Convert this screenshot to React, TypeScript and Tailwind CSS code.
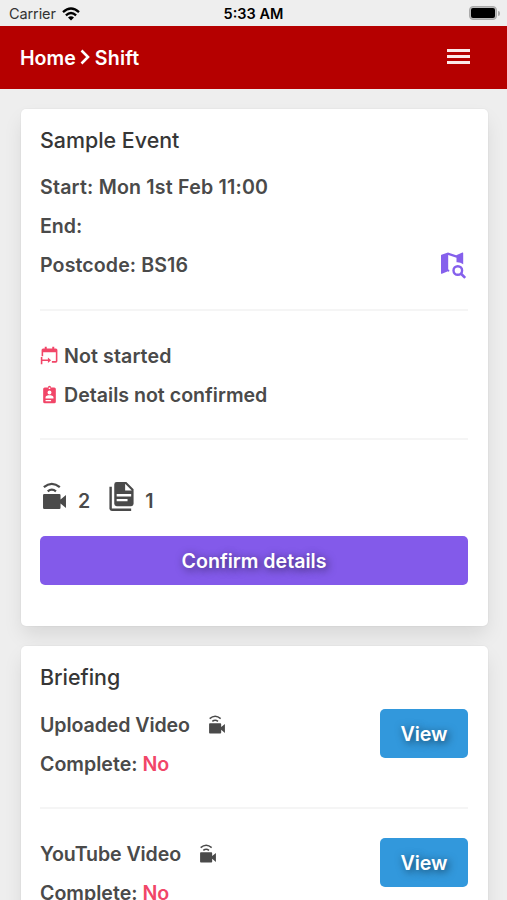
import type { ReactNode } from 'react'

function Icon({ className, children }: { className: string; children: ReactNode }) {
  return (
    <svg viewBox="0 0 24 24" fill="currentColor" className={`shrink-0 ${className}`}>
      {children}
    </svg>
  )
}

function VideoWireless({ className }: { className: string }) {
  return (
    <Icon className={className}>
      <path d="M3.500 10H16a1 1 0 0 1 1 1v3.500l4.500-3.700v10.700L17 17.800v3.500a1 1 0 0 1-1 1H3.500a1 1 0 0 1-1-1V11a1 1 0 0 1 1-1z" />
      <path d="M3.200 4.300Q9.800-1.200 16.400 4.300M6.400 7.700Q9.800 4.900 13.200 7.700" fill="none" stroke="currentColor" strokeWidth="1.900" />
    </Icon>
  )
}

function DocumentMultiple({ className }: { className: string }) {
  return (
    <Icon className={className}>
      <path
        fillRule="evenodd"
        d="M8 0h8l6 6v12a2 2 0 0 1-2 2H8a2 2 0 0 1-2-2V2a2 2 0 0 1 2-2zm7 1.5V7h5.5zM8 10v2h12v-2zm0 4v2h9v-2z"
      />
      <path d="M2 4h2v18h16v2H4a2 2 0 0 1-2-2z" />
    </Icon>
  )
}

function MapSearch({ className }: { className: string }) {
  return (
    <svg viewBox="0 0 29 29" fill="currentColor" className={`shrink-0 ${className}`}>
      <path d="M2.500 3.800 9 1.500l8.200 2.700L23.400 1.600q.8-.3.8.6v11q-3-2.300-6.700-2V6.700L9.200 4v14.500l1.300.4q-.5 1-.5 2l-1-.6-6.100 2.500q-.9.300-.9-.6V4.500q0-.5.500-.7z" />
      <circle cx="18.800" cy="19.500" r="4.300" fill="none" stroke="currentColor" strokeWidth="2.400" />
      <path d="m21.800 22.500 4.400 4.400" stroke="currentColor" strokeWidth="2.600" />
    </svg>
  )
}

function CalendarStart({ className }: { className: string }) {
  return (
    <Icon className={className}>
      <path d="M4 3h2V1h2.500v2h7V1H18v2h2a2 2 0 0 1 2 2v14a2 2 0 0 1-2 2h-5v-2h5V8H4v5H2V5a2 2 0 0 1 2-2z" />
      <path d="M1 14h2v3h7v-2.500l4 3.500-4 3.500V19H3v4H1z" />
    </Icon>
  )
}

function ClipboardAccount({ className }: { className: string }) {
  return (
    <Icon className={className}>
      <path
        fillRule="evenodd"
        d="M6 3h4a2 2 0 0 1 4 0h4a2 2 0 0 1 2 2v16a2 2 0 0 1-2 2H6a2 2 0 0 1-2-2V5a2 2 0 0 1 2-2zm5 0v2h2V3zm1 4a2.500 2.500 0 0 0 0 5 2.500 2.500 0 0 0 0-5zm-5 8.500V17h10v-1.500c0-1.700-3-2.500-5-2.500s-5 .8-5 2.500zM7 19v1.500h7V19z"
      />
    </Icon>
  )
}

function StatusBar() {
  return (
    <div className="grid h-[26px] grid-cols-3 items-center px-[9px] pt-[2px] text-black">
      <div className="flex items-center gap-1.5 text-[14.5px] font-normal text-[#333]">
        <span className="tracking-[-0.1px]">Carrier</span>
        <svg viewBox="0 0 18 14" className="h-[14px] w-[18px] text-black" fill="none" stroke="currentColor" strokeWidth="2.3">
          <path d="M1 5.200Q9-2.200 17 5.200M3.900 8.300Q9 3.600 14.100 8.300" />
          <path d="M9 13.500 6 10.400Q9 8 12 10.400z" fill="currentColor" stroke="none" />
        </svg>
      </div>
      <div className="text-center text-[14.5px] font-semibold">5:33 AM</div>
      <div className="-mr-[2px] flex items-center justify-end pb-[2px]">
        <div className="h-[14px] w-[28px] rounded-[4px] border border-[#aaa] bg-[#bbb] p-[1px]">
          <div className="h-full rounded-[2px] bg-black" />
        </div>
        <div className="ml-px h-[5px] w-[2px] rounded-r-full bg-[#aaa]" />
      </div>
    </div>
  )
}

function Header() {
  return (
    <header className="flex h-[63px] items-center justify-between bg-[#b50000] pl-5 pr-[37px] text-white">
      <nav className="flex items-center pt-[2px] text-[19.600px] font-semibold">
        <span>Home</span>
        <svg viewBox="0 0 10 16" className="mb-[2px] ml-[4px] mr-[5px] h-4 w-[10px]" fill="none" stroke="currentColor" strokeWidth="2.600">
          <path d="M1.500 1.500 8 8l-6.500 6.500" />
        </svg>
        <span className="tracking-[0.2px]">Shift</span>
      </nav>
      <div className="flex w-[23px] flex-col gap-[3px] pb-[3px]">
        <div className="h-[3px] bg-[#fbeaea]" />
        <div className="h-[3px] bg-[#fbeaea]" />
        <div className="h-[3px] bg-[#fbeaea]" />
      </div>
    </header>
  )
}

function Card({ className, children }: { className: string; children: ReactNode }) {
  return (
    <section
      className={`ml-[20.5px] mr-[19.5px] rounded-[5px] bg-white pl-[19.5px] pr-[19.5px] pt-[12px] shadow-[0_10px_20px_-2px_rgba(10,10,10,0.1),0_0_0_1px_rgba(10,10,10,0.02)] ${className}`}
    >
      {children}
    </section>
  )
}

function Divider() {
  return <hr className="h-[2px] border-0 bg-[#f5f5f5]" />
}

function Briefing({ title }: { title: string }) {
  return (
    <div className="flex h-[102px] items-start justify-between">
      <div className="pt-px leading-[39px]">
        <div className="flex items-center">
          <span className="tracking-[-0.1px]">{title}</span>
          <VideoWireless className="ml-[17px] h-[20px] w-[20px] -translate-y-px" />
        </div>
        <div>
          Complete: <span className="text-[#f14668]">No</span>
        </div>
      </div>
      <button className="mt-[4px] h-[49px] w-[88px] rounded-[5px] bg-[#3298dc] pt-[2px] font-semibold text-white [text-shadow:2px_2px_8px_rgba(0,0,0,0.6)]">
        View
      </button>
    </div>
  )
}

export default function App() {
  return (
    <div className="h-[900px] overflow-hidden bg-[#eeeeee] font-['Inter',sans-serif] text-[19.600px] font-semibold text-[#4a4a4a]">
      <StatusBar />
      <Header />
      <main className="pt-5">
        <Card className="h-[517px]">
          <h2 className="mb-[8px] text-[21.400px] font-medium leading-[39px] text-[#363636]">Sample Event</h2>
          <div className="leading-[39px]">
            <div className="tracking-[0.2px]">Start: Mon 1st Feb 11:00</div>
            <div>End:</div>
            <div className="flex items-center justify-between">
              <span className="tracking-[0.1px]">Postcode: BS16</span>
              <MapSearch className="h-[29px] w-[29px] text-[#8560ec]" />
            </div>
          </div>
          <div className="mt-[24px]">
            <Divider />
          </div>
          <div className="mt-[26px] leading-[39px]">
            <div className="flex items-center gap-[5px]">
              <CalendarStart className="h-[19px] w-[19px] -translate-y-px text-[#f14668]" />
              <span className="tracking-[0.1px]">Not started</span>
            </div>
            <div className="flex items-center gap-[5px]">
              <ClipboardAccount className="h-[19px] w-[19px] -translate-y-px text-[#f14668]" />
              Details not confirmed
            </div>
          </div>
          <div className="mt-[23px]">
            <Divider />
          </div>
          <div className="mt-[42px] flex h-[34px] items-start">
            <VideoWireless className="h-[29px] w-[29px]" />
            <span className="ml-[9px] mt-[5px]">2</span>
            <DocumentMultiple className="ml-[17px] h-[29px] w-[29px]" />
            <span className="ml-[9px] mt-[5px]">1</span>
          </div>
          <button className="mt-[20px] h-[49px] w-full rounded-[5px] bg-[#835aea] pt-[2px] font-semibold text-white [text-shadow:2px_2px_8px_rgba(0,0,0,0.6)]">
            Confirm details
          </button>
        </Card>
        <Card className="mt-5 h-[400px]">
          <h2 className="mb-[8px] text-[21.400px] font-medium leading-[39px] text-[#363636]">Briefing</h2>
          <Briefing title="Uploaded Video" />
          <Divider />
          <div className="pt-[25px]">
            <Briefing title="YouTube Video" />
          </div>
        </Card>
      </main>
    </div>
  )
}
